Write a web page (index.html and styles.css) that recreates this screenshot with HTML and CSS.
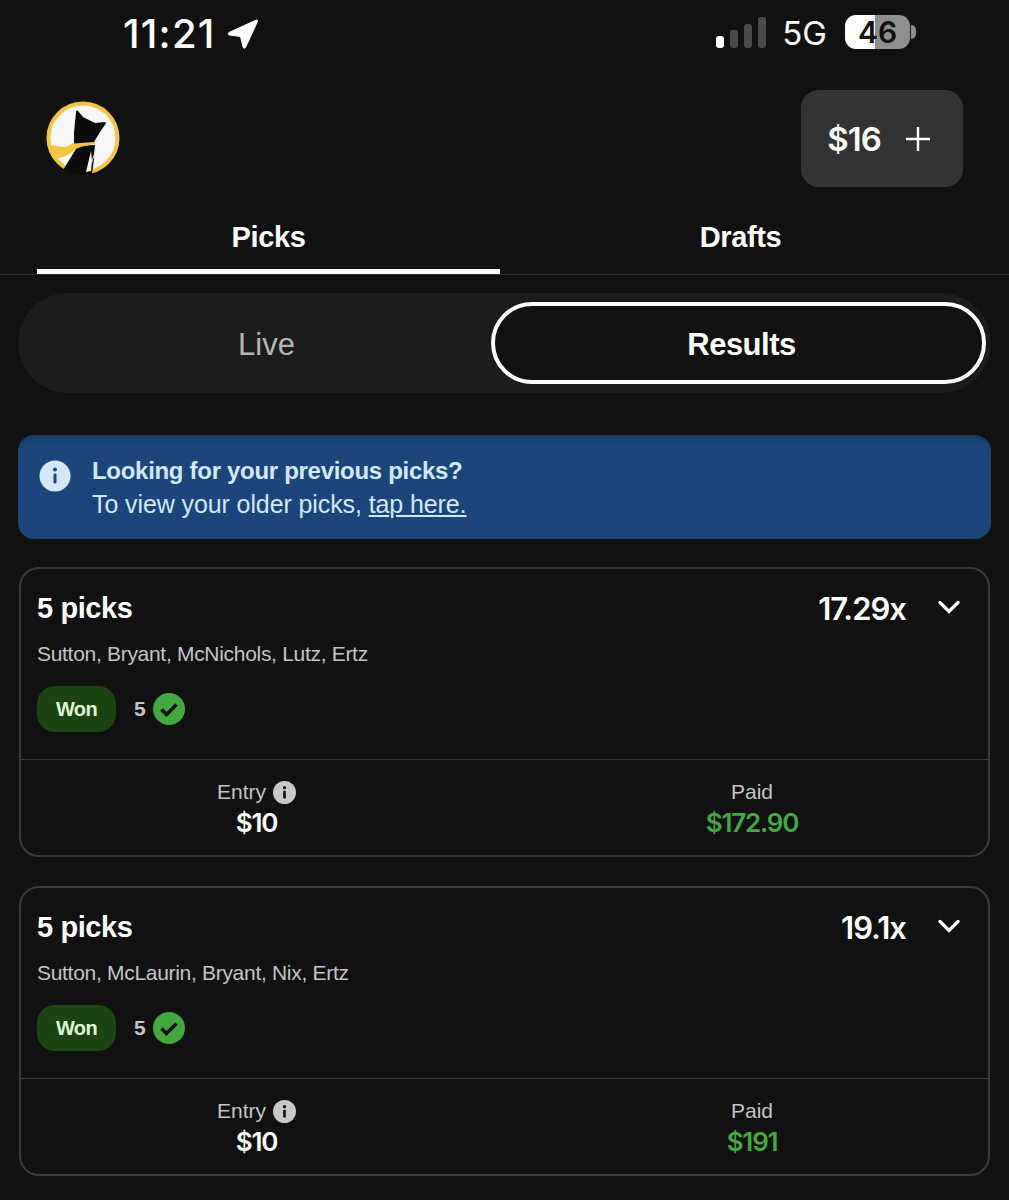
FILE: index.html
```html
<!DOCTYPE html>
<html lang="en">
<head>
  <meta charset="UTF-8" />
  <title>Picks</title>
  <link rel="stylesheet" href="styles.css">
</head>
<body>
  <div class="status-bar">
    <div class="status-left">
      <span class="time">11:21</span>
      <svg class="location" viewBox="0 0 32 32" width="32" height="32"><path d="M2 14.500 29 2.200c1-.4 1.800.4 1.400 1.400L18.500 29.500c-.5 1.100-2 1-2.300-.2L13.500 18.500 2.400 17c-1.300-.3-1.500-1.900-.4-2.500z" fill="#fff" stroke="#fff" stroke-linejoin="round"/></svg>
    </div>
    <div class="status-right">
      <div class="signal">
        <span class="bar bar-1"></span>
        <span class="bar bar-2"></span>
        <span class="bar bar-3"></span>
        <span class="bar bar-4"></span>
      </div>
      <span class="network">5G</span>
      <div class="battery"><span>46</span></div>
      <span class="battery-nub"></span>
    </div>
  </div>

  <header class="top">
    <svg class="logo" viewBox="0 0 74 75" width="74" height="75">
      <circle cx="37" cy="37" r="34.500" fill="#f6f6f6" stroke="#f4c542" stroke-width="4"/>
      <path d="M3 44c6 0 10 2 15 2 4 0 7-4 11-4.500 7-1 14-1 20-.8V43c-7 1-14 3-20 6-3 2-6 4-9 6l-11 3c-3-4-5-9-6-14z" fill="#f4c542"/>
      <path d="M30 11c.5-2 1-2 2-1l5 6 12 6 10-1c1 0 1 1 .5 2L54 31l-6 10-20 1.500L28 32z" fill="#0c0c0c"/>
      <path d="M30 48c6-3 12-4 19-4l-1 14-2 15c-7 2-14 1-21 0l-8-4z" fill="#0c0c0c"/>
      <path d="M45 50 40 71 45 70 46 60z" fill="#f6f6f6"/>
      <path d="M49.500 46c0 7-3 11-4 16" fill="none" stroke="#f6f6f6" stroke-width="1"/>
    </svg>
    <div class="balance">
      <span>$16</span>
      <svg viewBox="0 0 26 26" width="26" height="26"><path d="M13 1v24M1 13h24" stroke="#fff" stroke-width="2.400" fill="none"/></svg>
    </div>
  </header>

  <nav class="tabs">
    <div class="tab active">Picks</div>
    <div class="tab">Drafts</div>
  </nav>

  <main class="content">
    <div class="segment">
      <div class="segment-item">Live</div>
      <div class="segment-item selected">Results</div>
    </div>

    <div class="notice">
      <svg class="notice-icon" viewBox="0 0 32 32" width="32" height="32">
        <circle cx="16" cy="16" r="15.500" fill="#d3e8fb"/>
        <circle cx="16" cy="9.500" r="2" fill="#1c4679"/>
        <rect x="14.500" y="13.500" width="3" height="10" rx="1" fill="#1c4679"/>
      </svg>
      <div>
        <div class="notice-title">Looking for your previous picks?</div>
        <div class="notice-text">To view your older picks, <a href="#">tap here.</a></div>
      </div>
    </div>

    <section class="card">
      <div class="card-body">
        <div class="card-head">
          <span class="card-title">5 picks</span>
          <span class="multiplier">17.29x</span>
          <svg class="chevron" viewBox="0 0 22 14" width="22" height="14"><path d="M2 2.500 11 11.500 20 2.500" stroke="#fff" stroke-width="3.200" fill="none" stroke-linecap="round"/></svg>
        </div>
        <div class="players">Sutton, Bryant, McNichols, Lutz, Ertz</div>
        <div class="result-row">
          <span class="won">Won</span>
          <span class="count">5</span>
          <svg viewBox="0 0 32 32" width="32" height="32"><circle cx="16" cy="16" r="16" fill="#44a840"/><path d="M8.500 16.500 13.500 21.500 23.500 11.500" stroke="#111" stroke-width="3.600" fill="none"/></svg>
        </div>
      </div>
      <div class="card-foot">
        <div class="stat">
          <div class="stat-label">Entry
            <svg viewBox="0 0 24 24" width="23" height="23"><circle cx="12" cy="12" r="12" fill="#c8c8c8"/><circle cx="12" cy="7" r="1.700" fill="#111"/><rect x="10.600" y="10.300" width="2.800" height="8" rx=".6" fill="#111"/></svg>
          </div>
          <div class="stat-value">$10</div>
        </div>
        <div class="stat">
          <div class="stat-label">Paid</div>
          <div class="stat-value paid">$172.90</div>
        </div>
      </div>
    </section>

    <section class="card">
      <div class="card-body">
        <div class="card-head">
          <span class="card-title">5 picks</span>
          <span class="multiplier">19.1x</span>
          <svg class="chevron" viewBox="0 0 22 14" width="22" height="14"><path d="M2 2.500 11 11.500 20 2.500" stroke="#fff" stroke-width="3.200" fill="none" stroke-linecap="round"/></svg>
        </div>
        <div class="players">Sutton, McLaurin, Bryant, Nix, Ertz</div>
        <div class="result-row">
          <span class="won">Won</span>
          <span class="count">5</span>
          <svg viewBox="0 0 32 32" width="32" height="32"><circle cx="16" cy="16" r="16" fill="#44a840"/><path d="M8.500 16.500 13.500 21.500 23.500 11.500" stroke="#111" stroke-width="3.600" fill="none"/></svg>
        </div>
      </div>
      <div class="card-foot">
        <div class="stat">
          <div class="stat-label">Entry
            <svg viewBox="0 0 24 24" width="23" height="23"><circle cx="12" cy="12" r="12" fill="#c8c8c8"/><circle cx="12" cy="7" r="1.700" fill="#111"/><rect x="10.600" y="10.300" width="2.800" height="8" rx=".6" fill="#111"/></svg>
          </div>
          <div class="stat-value">$10</div>
        </div>
        <div class="stat">
          <div class="stat-label">Paid</div>
          <div class="stat-value paid">$191</div>
        </div>
      </div>
    </section>
  </main>
</body>
</html>
```

FILE: styles.css
```css
html, body {
  height: 1200px;
  overflow: hidden;
}
body {
  margin: 0;
  background: #111;
  color: #fff;
  font-family: "Liberation Sans", Arial, sans-serif;
}

/* status bar */
.status-bar {
  height: 70px;
  display: flex;
  justify-content: space-between;
  align-items: flex-start;
  padding: 0 93px 0 123px;
  font-family: Inter, sans-serif;
}
.status-left {
  display: flex;
  align-items: center;
  gap: 11px;
  height: 67px;
}
.time {
  font-size: 40px;
  font-weight: 500;
  letter-spacing: 1.2px;
}
.status-right {
  display: flex;
  align-items: center;
  height: 66px;
}
.signal {
  display: flex;
  align-items: flex-end;
  gap: 5.500px;
  height: 31px;
  margin-top: -1px;
}
.bar {
  width: 8.500px;
  border-radius: 3px;
  background: #4a4a4a;
}
.bar-1 { height: 12px; background: #fff; }
.bar-2 { height: 18px; }
.bar-3 { height: 24px; }
.bar-4 { height: 31px; }
.network {
  font-size: 33px;
  margin-left: 16px;
}
.battery {
  width: 65px;
  height: 34px;
  margin: -2px 0 0 18px;
  border-radius: 11px;
  background: linear-gradient(to right, #fff 46%, #8f8f8f 46%);
  color: #111;
  font-size: 30px;
  font-weight: 600;
  display: flex;
  align-items: center;
  justify-content: center;
}
.battery-nub {
  width: 5px;
  height: 14px;
  margin: -2px 0 0 1px;
  border-radius: 0 5px 5px 0;
  background: #8f8f8f;
}

/* header */
.top {
  height: 117px;
  box-sizing: border-box;
  display: flex;
  justify-content: space-between;
  align-items: flex-start;
  padding: 20px 46px 0;
}
.logo {
  margin-top: 11px;
}
.balance {
  width: 162px;
  height: 97px;
  box-sizing: border-box;
  background: #333;
  border-radius: 18px;
  padding-right: 6px;
  display: flex;
  align-items: center;
  justify-content: center;
  gap: 24px;
  font-family: Inter, sans-serif;
  font-size: 33px;
  font-weight: 600;
  letter-spacing: -1px;
}

/* tabs */
.tabs {
  display: flex;
  height: 88px;
  padding-left: 37px;
  border-bottom: 1px solid #2e2e2e;
  box-sizing: border-box;
}
.tab {
  width: 463px;
  font-size: 29px;
  font-weight: 700;
  letter-spacing: -0.4px;
  text-align: center;
  padding-top: 34px;
  box-sizing: border-box;
}
.tab + .tab {
  margin-left: 9px;
}
.tab.active {
  border-bottom: 5px solid #fff;
}

.content {
  padding: 18px 18px 0;
}

/* live / results switch */
.segment {
  display: flex;
  align-items: center;
  height: 100px;
  background: #1c1c1c;
  border-radius: 50px;
  padding-right: 5px;
}
.segment-item {
  flex: 1;
  padding: 4px 0 0 24px;
  height: 82px;
  box-sizing: border-box;
  display: flex;
  align-items: center;
  justify-content: center;
  font-size: 31px;
  color: #b5b5b5;
}
.segment-item.selected {
  flex: none;
  width: 495px;
  padding: 4px 0 0 6px;
  background: #111;
  border: 4px solid #fff;
  border-radius: 41px;
  color: #fff;
  font-weight: 700;
  letter-spacing: -0.5px;
}

/* notice */
.notice {
  margin: 42px 0 0;
  height: 104px;
  box-sizing: border-box;
  background: #1c4679;
  border-radius: 16px;
  box-shadow: inset 0 6px 6px -4px rgba(0,0,0,0.25);
  display: flex;
  gap: 21px;
  padding: 20px 21px 0;
  color: #d3e8fb;
}
.notice-icon {
  margin-top: 5px;
  flex: none;
}
.notice-title {
  font-size: 24px;
  font-weight: 700;
  letter-spacing: -0.3px;
  line-height: 32px;
}
.notice-text {
  font-size: 25px;
  letter-spacing: -0.1px;
  line-height: 34px;
}
.notice-text a {
  color: inherit;
}

/* pick cards */
.card {
  margin: 28px 0 0 1px;
  width: 971px;
  height: 290px;
  box-sizing: border-box;
  border: 2px solid #3a3a3a;
  border-radius: 20px;
  display: flex;
  flex-direction: column;
}
.card + .card {
  margin-top: 29px;
}
.card-body {
  height: 191px;
  box-sizing: border-box;
  border-bottom: 1px solid #3a3a3a;
  padding: 21px 28px 0 16px;
}
.card-head {
  display: flex;
  align-items: center;
  height: 37px;
}
.card-title {
  font-size: 29px;
  font-weight: 700;
  letter-spacing: -0.4px;
  flex: 1;
}
.multiplier {
  font-family: Inter, sans-serif;
  font-size: 31px;
  font-weight: 600;
  letter-spacing: -1px;
  margin-right: 32px;
}
.chevron {
  margin-top: -3px;
}
.players {
  margin-top: 12px;
  font-size: 21px;
  letter-spacing: -0.3px;
  color: #c4c4c4;
  line-height: 30px;
}
.result-row {
  display: flex;
  align-items: center;
  margin-top: 17px;
}
.won {
  width: 79px;
  height: 46px;
  border-radius: 18px;
  background: #1e4313;
  color: #d9f7d6;
  font-size: 20px;
  font-weight: 700;
  letter-spacing: -0.6px;
  display: flex;
  align-items: center;
  justify-content: center;
}
.count {
  margin: 0 7px 0 18px;
  font-size: 21px;
  font-weight: 700;
  color: #c4c4c4;
}
.card-foot {
  display: flex;
  flex: 1;
}
.stat {
  flex: none;
  width: 471px;
  text-align: center;
  padding-top: 18px;
  box-sizing: border-box;
}
.stat + .stat {
  flex: 1;
  padding-left: 24px;
}
.stat-label {
  display: flex;
  align-items: center;
  justify-content: center;
  gap: 7px;
  height: 28px;
  font-size: 21px;
  color: #c4c4c4;
}
.stat-value {
  font-family: Inter, sans-serif;
  font-size: 26px;
  font-weight: 600;
  letter-spacing: -1.2px;
  line-height: 34px;
}
.stat-value.paid {
  color: #44a840;
}
```
